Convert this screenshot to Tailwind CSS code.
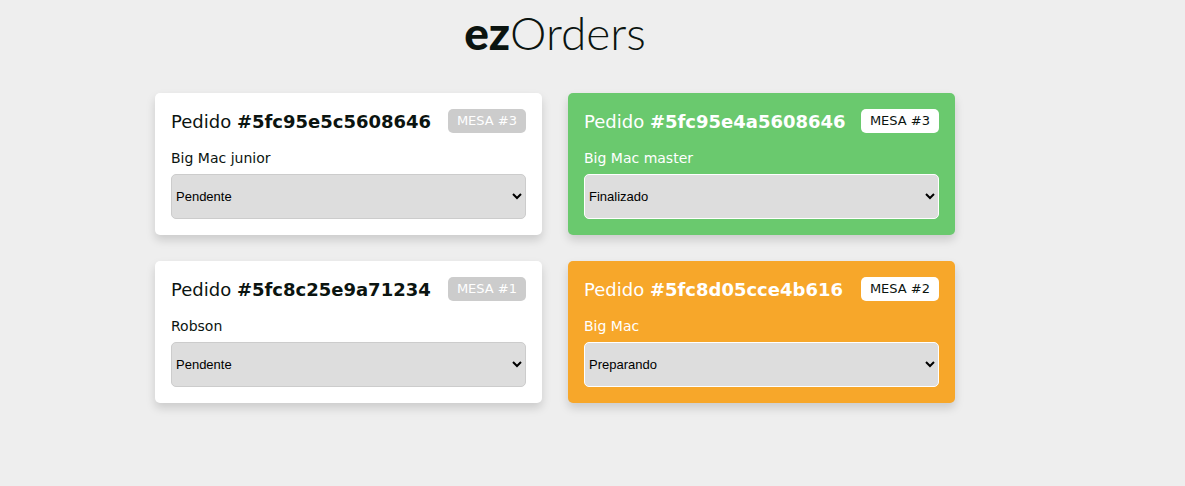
<!DOCTYPE html>
<html lang="pt-BR">
<head>
<meta charset="utf-8">
<meta name="viewport" content="width=device-width, initial-scale=1">
<title>ezOrders</title>
<script src="https://cdn.jsdelivr.net/npm/@tailwindcss/browser@4"></script>
</head>
<body class="min-h-screen bg-[#eeeeee] pr-[75px] font-['DejaVu_Sans',sans-serif] text-sm text-[#0b1410]">
<header class="flex h-[65px] items-center justify-center">
  <h1 class="font-[Lato,sans-serif] text-[46px] leading-none font-light"><span class="font-black">ez</span>Orders</h1>
</header>
<main class="mx-auto mt-7 grid max-w-[800px] grid-cols-1 gap-[26px] md:grid-cols-2">
  <article class="rounded-[5px] bg-white p-4 shadow-[0_5px_10px_rgba(0,0,0,0.15)]">
    <div class="flex items-start justify-between">
      <h2 class="text-lg leading-[26px]">Pedido <strong>#5fc95e5c5608646</strong></h2>
      <span class="rounded-[5px] bg-[#cccccc] px-[9px] text-[13px] leading-6 text-white">MESA #3</span>
    </div>
    <label for="order1" class="mt-[13px] block leading-5">Big Mac junior</label>
    <select id="order1" class="mt-[6px] block h-[45px] w-full rounded-[5px] border border-[#cccccc] bg-[#dddddd] font-['Liberation_Sans',sans-serif] text-[13px] text-black"><option>Pendente</option><option>Preparando</option><option>Finalizado</option></select>
  </article>
  <article class="rounded-[5px] bg-[#6ac96e] p-4 text-white shadow-[0_5px_10px_rgba(0,0,0,0.15)]">
    <div class="flex items-start justify-between">
      <h2 class="text-lg leading-[26px]">Pedido <strong>#5fc95e4a5608646</strong></h2>
      <span class="rounded-[5px] bg-white px-[9px] text-[13px] leading-6 text-[#0b1410]">MESA #3</span>
    </div>
    <label for="order2" class="mt-[13px] block leading-5">Big Mac master</label>
    <select id="order2" class="mt-[6px] block h-[45px] w-full rounded-[5px] border border-white bg-[#dddddd] font-['Liberation_Sans',sans-serif] text-[13px] text-black"><option>Pendente</option><option>Preparando</option><option selected>Finalizado</option></select>
  </article>
  <article class="rounded-[5px] bg-white p-4 shadow-[0_5px_10px_rgba(0,0,0,0.15)]">
    <div class="flex items-start justify-between">
      <h2 class="text-lg leading-[26px]">Pedido <strong>#5fc8c25e9a71234</strong></h2>
      <span class="rounded-[5px] bg-[#cccccc] px-[9px] text-[13px] leading-6 text-white">MESA #1</span>
    </div>
    <label for="order3" class="mt-[13px] block leading-5">Robson</label>
    <select id="order3" class="mt-[6px] block h-[45px] w-full rounded-[5px] border border-[#cccccc] bg-[#dddddd] font-['Liberation_Sans',sans-serif] text-[13px] text-black"><option>Pendente</option><option>Preparando</option><option>Finalizado</option></select>
  </article>
  <article class="rounded-[5px] bg-[#f7a72a] p-4 text-white shadow-[0_5px_10px_rgba(0,0,0,0.15)]">
    <div class="flex items-start justify-between">
      <h2 class="text-lg leading-[26px]">Pedido <strong>#5fc8d05cce4b616</strong></h2>
      <span class="rounded-[5px] bg-white px-[9px] text-[13px] leading-6 text-[#0b1410]">MESA #2</span>
    </div>
    <label for="order4" class="mt-[13px] block leading-5">Big Mac</label>
    <select id="order4" class="mt-[6px] block h-[45px] w-full rounded-[5px] border border-white bg-[#dddddd] font-['Liberation_Sans',sans-serif] text-[13px] text-black"><option>Pendente</option><option selected>Preparando</option><option>Finalizado</option></select>
  </article>
</main>
</body>
</html>
